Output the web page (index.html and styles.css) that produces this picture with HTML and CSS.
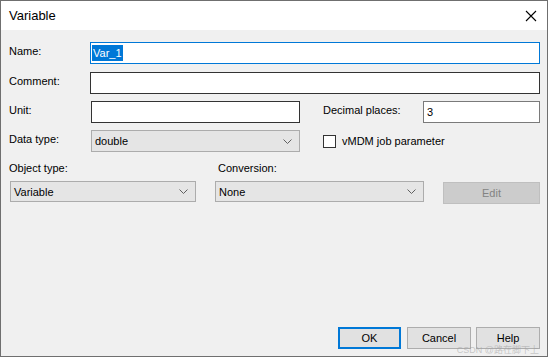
FILE: index.html
```html
<!DOCTYPE html>
<html lang="en">
<head>
    <meta charset="UTF-8">
    <title>Variable</title>
    <link rel="stylesheet" href="styles.css">
</head>
<body>
    <div class="window">
        <div class="titlebar">
            <span class="title">Variable</span>
            <svg class="close" width="12" height="12" viewBox="0 0 12 12">
                <path d="M1 1 L11 11 M11 1 L1 11" stroke="#000" stroke-width="1.1" fill="none"/>
            </svg>
        </div>
        <div class="content">
            <div class="row">
                <span class="label">Name:</span>
                <div class="field focus wide"><span class="sel">Var_1</span></div>
            </div>
            <div class="row">
                <span class="label">Comment:</span>
                <div class="field dark wide"></div>
            </div>
            <div class="row">
                <span class="label">Unit:</span>
                <div class="field dark unit"></div>
                <span class="label dec">Decimal places:</span>
                <div class="field gray decimal">3</div>
            </div>
            <div class="row">
                <span class="label">Data type:</span>
                <div class="combo unit">
                    <span>double</span>
                    <svg width="9" height="5" viewBox="0 0 9 5"><path d="M0.5 0.5 L4.5 4.5 L8.5 0.5" stroke="#606060" fill="none"/></svg>
                </div>
                <label class="check"><span class="box"></span>vMDM job parameter</label>
            </div>
            <div class="row labels">
                <span class="col-obj">Object type:</span>
                <span>Conversion:</span>
            </div>
            <div class="row combos">
                <div class="combo obj">
                    <span>Variable</span>
                    <svg width="9" height="5" viewBox="0 0 9 5"><path d="M0.5 0.5 L4.5 4.5 L8.5 0.5" stroke="#606060" fill="none"/></svg>
                </div>
                <div class="combo conv">
                    <span>None</span>
                    <svg width="9" height="5" viewBox="0 0 9 5"><path d="M0.5 0.5 L4.5 4.5 L8.5 0.5" stroke="#606060" fill="none"/></svg>
                </div>
                <div class="btn disabled">Edit</div>
            </div>
            <div class="spacer"></div>
            <div class="buttons">
                <div class="btn default">OK</div>
                <div class="btn">Cancel</div>
                <div class="btn">Help</div>
            </div>
            <span class="watermark">CSDN @路在脚下上</span>
        </div>
    </div>
</body>
</html>
```

FILE: styles.css
```css
html,body{
    margin:0;
    padding:0;
}
body{
    font-family:"Liberation Sans",Arial,sans-serif;
    font-size:11px;
    color:#000;
}
.window{
    width:548px;
    height:357px;
    box-sizing:border-box;
    border:1px solid #6f6f6f;
    display:flex;
    flex-direction:column;
    background:#f0f0f0;
}
.titlebar{
    height:29px;
    background:#fff;
    display:flex;
    align-items:center;
    justify-content:space-between;
    padding:0 10px 0 8px;
}
.title{
    font-size:13px;
}
.close{
    display:block;
}
.content{
    flex:1;
    position:relative;
    display:flex;
    flex-direction:column;
    padding:12px 7px 7px 8px;
}
.row{
    display:flex;
    align-items:center;
    height:22px;
    margin-bottom:7px;
}
.row:first-child{
    margin-bottom:8px;
}
.label{
    width:81px;
    flex:none;
    padding-bottom:4px;
}
.field{
    box-sizing:border-box;
    height:22px;
    background:#fff;
    border:1px solid #333;
    padding:0 3px;
    display:flex;
    align-items:center;
}
.field.focus{
    border-color:#0078d7;
    padding-left:1px;
}
.field.gray{
    border-color:#7a7a7a;
}
.wide{
    flex:1;
}
.unit{
    width:209px;
    margin-left:1px;
}
.label.dec{
    width:100px;
    margin-left:23px;
}
.decimal{
    flex:1;
}
.sel{
    background:#0078d7;
    color:#fff;
    line-height:16px;
    padding:0 1px;
}
.combo{
    box-sizing:border-box;
    height:22px;
    background:#e5e5e5;
    border:1px solid #acacac;
    display:flex;
    align-items:center;
    justify-content:space-between;
    padding:0 7px 0 3px;
}
.check{
    display:flex;
    align-items:center;
    margin-left:23px;
}
.box{
    width:11px;
    height:11px;
    border:1px solid #333;
    background:#fff;
    margin-right:6px;
}
.labels{
    height:14px;
    margin-top:2px;
    margin-bottom:6px;
}
.col-obj{
    width:209px;
    flex:none;
}
.combos{
    height:22px;
    align-items:flex-start;
}
.obj{
    width:186px;
    height:21px;
    margin-left:1px;
}
.conv{
    width:209px;
    height:21px;
    margin-left:19px;
}
.btn{
    box-sizing:border-box;
    width:64px;
    height:22px;
    background:#e1e1e1;
    border:1px solid #adadad;
    display:flex;
    align-items:center;
    justify-content:center;
}
.btn.disabled{
    width:97px;
    margin-left:19px;
    margin-top:1px;
    background:#cccccc;
    border-color:#bfbfbf;
    color:#838383;
}
.btn.default{
    border:2px solid #0078d7;
    width:63px;
}
.spacer{
    flex:1;
}
.buttons{
    display:flex;
    justify-content:flex-end;
    gap:5px;
}
.buttons .btn:first-child{
    margin-right:1px;
}
.watermark{
    position:absolute;
    right:8px;
    bottom:1px;
    font-family:"Liberation Sans","Noto Sans CJK SC",sans-serif;
    font-size:9px;
    line-height:10px;
    color:rgba(160,160,160,.55);
}
```
